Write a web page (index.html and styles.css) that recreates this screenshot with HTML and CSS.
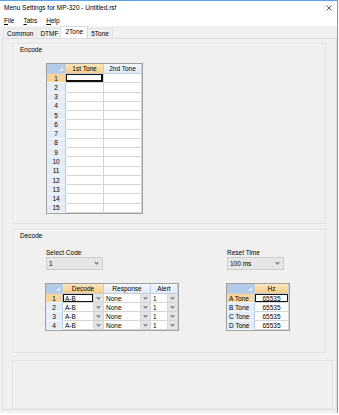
FILE: index.html
```html
<!DOCTYPE html>
<html>
<head>
<meta charset="utf-8">
<title>Menu Settings for MP-320 - Untitled.rsf</title>
<link rel="stylesheet" href="styles.css">
</head>
<body>
<div class="window">
  <div class="titlebar">
    <span>Menu Settings for MP-320 - Untitled.rsf</span>
    <svg class="close" width="6" height="6" viewBox="0 0 6 6"><path d="M0.5 0.5L5.5 5.5M5.5 0.5L0.5 5.5" stroke="#333" stroke-width="0.8"/></svg>
  </div>
  <div class="menubar">
    <span><u>F</u>ile</span>
    <span><u>T</u>abs</span>
    <span><u>H</u>elp</span>
  </div>
  <div class="tabstrip">
    <span class="tab">Common</span>
    <span class="tab">DTMF</span>
    <span class="tab active">2Tone</span>
    <span class="tab">5Tone</span>
  </div>
  <div class="tabpage">

    <div class="group encode">
      <div class="glabel">Encode</div>
      <div class="dgrid enc">
        <div class="c h corner"></div>
        <div class="c h sel">1st Tone</div>
        <div class="c h">2nd Tone</div>

        <div class="c rh sel">1</div><div class="c cur wide"></div><div class="c"></div>
        <div class="c rh">2</div><div class="c"></div><div class="c"></div>
        <div class="c rh">3</div><div class="c"></div><div class="c"></div>
        <div class="c rh">4</div><div class="c"></div><div class="c"></div>
        <div class="c rh">5</div><div class="c"></div><div class="c"></div>
        <div class="c rh">6</div><div class="c"></div><div class="c"></div>
        <div class="c rh">7</div><div class="c"></div><div class="c"></div>
        <div class="c rh">8</div><div class="c"></div><div class="c"></div>
        <div class="c rh">9</div><div class="c"></div><div class="c"></div>
        <div class="c rh">10</div><div class="c"></div><div class="c"></div>
        <div class="c rh">11</div><div class="c"></div><div class="c"></div>
        <div class="c rh">12</div><div class="c"></div><div class="c"></div>
        <div class="c rh">13</div><div class="c"></div><div class="c"></div>
        <div class="c rh">14</div><div class="c"></div><div class="c"></div>
        <div class="c rh">15</div><div class="c"></div><div class="c"></div>
      </div>
    </div>

    <div class="group decode">
      <div class="glabel">Decode</div>
      <div class="cols">
        <div class="col left">
          <div class="flabel">Select Code</div>
          <div class="combo"><span>1</span><i class="chev"></i></div>
          <div class="dgrid dec">
            <div class="c h corner"></div>
            <div class="c h sel">Decode</div>
            <div class="c h">Response</div>
            <div class="c h">Alert</div>

            <div class="c rh sel">1</div>
            <div class="c dd"><span class="val cur">A-B</span><span class="btn"><i class="chev"></i></span></div>
            <div class="c dd"><span class="val">None</span><span class="btn"><i class="chev"></i></span></div>
            <div class="c dd"><span class="val">1</span><span class="btn"><i class="chev"></i></span></div>

            <div class="c rh">2</div>
            <div class="c dd"><span class="val">A-B</span><span class="btn"><i class="chev"></i></span></div>
            <div class="c dd"><span class="val">None</span><span class="btn"><i class="chev"></i></span></div>
            <div class="c dd"><span class="val">1</span><span class="btn"><i class="chev"></i></span></div>

            <div class="c rh">3</div>
            <div class="c dd"><span class="val">A-B</span><span class="btn"><i class="chev"></i></span></div>
            <div class="c dd"><span class="val">None</span><span class="btn"><i class="chev"></i></span></div>
            <div class="c dd"><span class="val">1</span><span class="btn"><i class="chev"></i></span></div>

            <div class="c rh">4</div>
            <div class="c dd"><span class="val">A-B</span><span class="btn"><i class="chev"></i></span></div>
            <div class="c dd"><span class="val">None</span><span class="btn"><i class="chev"></i></span></div>
            <div class="c dd"><span class="val">1</span><span class="btn"><i class="chev"></i></span></div>
          </div>
        </div>
        <div class="col right">
          <div class="flabel">Reset Time</div>
          <div class="combo"><span>100 ms</span><i class="chev"></i></div>
          <div class="dgrid hz">
            <div class="c h corner"></div>
            <div class="c h sel">Hz</div>

            <div class="c rh sel">A Tone</div><div class="c num cur">65535</div>
            <div class="c rh">B Tone</div><div class="c num">65535</div>
            <div class="c rh">C Tone</div><div class="c num">65535</div>
            <div class="c rh">D Tone</div><div class="c num">65535</div>
          </div>
        </div>
      </div>
    </div>

    <div class="spare"></div>
  </div>
</div>
</body>
</html>
```

FILE: styles.css
```css
/* Janela estilo WinForms, reduzida */

body {
   margin: 0;
   background: #fff;
   font-family: "Liberation Sans", Arial, sans-serif;
   font-size: 6.5px;
   color: #000;
}

.window {
   box-sizing: border-box;
   width: 338px;
   height: 413px;
   border-top: 1px solid #5aa5e8;
   border-right: 1px solid #5aa5e8;
   background: #f0f0f0;
   display: flex;
   flex-direction: column;
   padding-bottom: 3px;
}

.titlebar {
   height: 13px;
   background: #fff;
   display: flex;
   align-items: center;
   justify-content: space-between;
   padding: 0 5px 0 4px;
}

.menubar {
   height: 12px;
   background: #fff;
   display: flex;
   align-items: center;
   gap: 9px;
   padding-left: 4px;
}

.tabstrip {
   height: 12px;
   display: flex;
   align-items: flex-end;
   padding-left: 3px;
}

.tab {
   height: 9px;
   line-height: 9px;
   padding: 0 3px;
   border: 1px solid #e3e3e3;
   border-bottom: none;
   border-right: none;
   background: #f0f0f0;
}

.tab.active {
   height: 11px;
   line-height: 10px;
   background: #fff;
   margin: 0 -1px;
   padding: 0 4px;
   border-color: #dadada;
   border-right: 1px solid #dadada;
   position: relative;
   z-index: 1;
}

.tab:last-child {
   border-right: 1px solid #e3e3e3;
}

.tabpage {
   flex: 1;
   margin-left: 2px;
   border: 1px solid #dedede;
   background: #f0f0f0;
   padding: 4px 0 0 10px;
}

.group {
   box-sizing: border-box;
   width: 313px;
   border: 1px solid #e3e3e3;
   box-shadow: inset 1px 1px 0 #f8f8f8;
   padding: 2px 0 0 6px;
}

.encode {
   height: 181px;
}

.decode {
   height: 124px;
   margin-top: 5px;
}

.glabel {
   height: 8px;
   line-height: 8px;
}

.spare {
   width: 321px;
   height: 49px;
   margin: 7px 0 0 -1px;
   box-sizing: border-box;
   border: 1px solid #e6e6e6;
}

/* grades de dados */

.dgrid {
   display: grid;
   box-sizing: border-box;
   border: 1px solid #a0a0a0;
   background: #fff;
}

.enc {
   width: 97px;
   height: 151px;
   margin: 9px 0 0 26px;
   grid-template-columns: 19px 38px 1fr;
   grid-template-rows: 10px repeat(15, 1fr);
}

.dec {
   width: 134px;
   height: 48px;
   margin-top: 13px;
   grid-template-columns: 17px 41px 47px 1fr;
   grid-template-rows: 10px repeat(4, 1fr);
}

.hz {
   width: 64px;
   height: 48px;
   margin-top: 13px;
   grid-template-columns: 28px 1fr;
   grid-template-rows: 10px repeat(4, 1fr);
}

.c {
   box-sizing: border-box;
   border-right: 1px solid #d5d5d5;
   border-bottom: 1px solid #d5d5d5;
   display: flex;
   align-items: center;
   justify-content: center;
   overflow: hidden;
   white-space: nowrap;
   min-height: 0;
}

.c.h {
   background: linear-gradient(#f5f8fc, #e2eaf5);
   border-right: 1px solid #c3cfdf;
   border-bottom: 1px solid #c3cfdf;
}

.c.h.sel {
   background: linear-gradient(#fce6bd, #f7cd85);
}

.c.corner {
   background: #b3cae9;
   position: relative;
}

.c.corner::after {
   content: "";
   position: absolute;
   right: 2px;
   bottom: 2px;
   border-left: 4px solid transparent;
   border-bottom: 4px solid #e6eef9;
}

.c.rh {
   background: #e4ecf7;
   border-right: 1px solid #b9c9de;
   border-bottom: 1px solid #f4f7fb;
}

.hz .c.rh {
   justify-content: flex-start;
   padding-left: 2px;
}

.c.rh.sel {
   background: #f9d59a;
}

.cur {
   box-shadow: inset 0 0 0 1px #111;
}

.cur.wide {
   box-shadow: inset 1px 1px 0 #111, inset -2px -2px 0 #111;
}

.c.dd {
   justify-content: space-between;
   align-items: stretch;
}

.val {
   flex: 1;
   display: flex;
   align-items: center;
   padding-left: 2px;
}

.btn {
   width: 9px;
   background: #e4e4e4;
   border-left: 1px solid #d6d6d6;
   display: flex;
   align-items: center;
   justify-content: center;
}

.chev {
   display: block;
   width: 2px;
   height: 2px;
   border-right: 1px solid #606060;
   border-bottom: 1px solid #606060;
   transform: rotate(45deg);
   margin-top: -2px;
}

/* campos da decodificacao */

.cols {
   display: flex;
   margin-top: 9px;
   margin-left: 25px;
}

.col.left {
   width: 181px;
}

.flabel {
   height: 8px;
   line-height: 8px;
   padding-left: 1px;
}

.combo {
   box-sizing: border-box;
   width: 57px;
   height: 13px;
   margin-left: 1px;
   background: #e6e6e6;
   border: 1px solid #cdcdcd;
   display: flex;
   align-items: center;
   justify-content: space-between;
   padding: 0 4px 0 2px;
}
```
